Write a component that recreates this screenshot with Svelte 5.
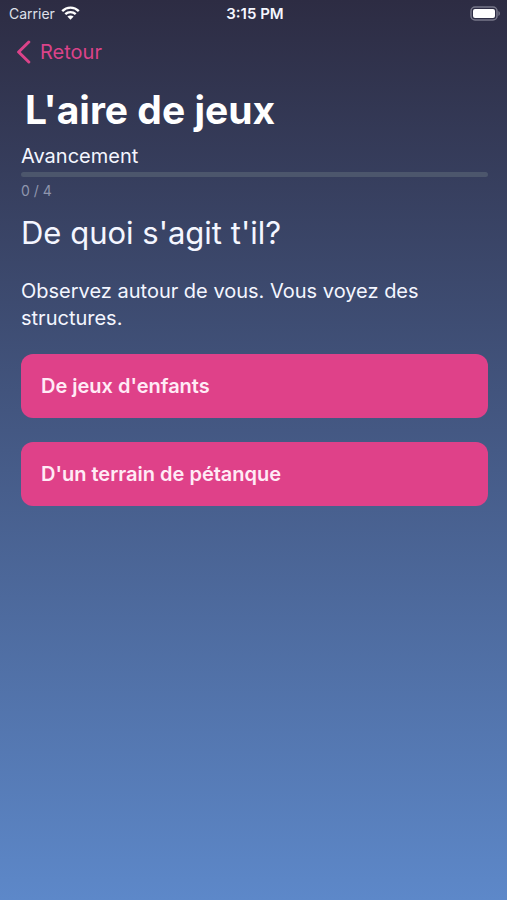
<script>
  const done = 0;
  const total = 4;
  const answers = ["De jeux d'enfants", "D'un terrain de pétanque"];
</script>

<div class="screen">
  <header class="status">
    <div class="carrier">
      <span>Carrier</span>
      <svg width="19" height="14" viewBox="0 0 19 14" aria-hidden="true">
        <g fill="none" stroke="#fff" stroke-width="2.4">
          <path d="M1.2 5.1C5.9.5 13.1.5 17.8 5.1" />
          <path d="M4.3 8.2c2.9-2.8 7.5-2.8 10.4 0" />
        </g>
        <path d="M9.5 13.8 6.4 10.6c1.8-1.6 4.4-1.6 6.2 0z" fill="#fff" />
      </svg>
    </div>
    <time>3:15 PM</time>
    <svg class="battery" width="31" height="15" viewBox="0 0 31 15" aria-hidden="true">
      <rect x="1" y="1" width="26" height="13" rx="4" fill="none" stroke="#777789" stroke-width="1.5" />
      <rect x="3" y="3" width="22" height="9" rx="2" fill="#fff" />
      <path d="M28.4 5v5c2-.8 2-4.2 0-5z" fill="#777789" />
    </svg>
  </header>

  <nav>
    <button class="back" type="button">
      <svg width="15" height="24" viewBox="0 0 15 24" aria-hidden="true">
        <path d="M12.8 2 2.6 12l10.2 10" fill="none" stroke="currentColor" stroke-width="3" stroke-linecap="round" stroke-linejoin="round" />
      </svg>
      <span>Retour</span>
    </button>
  </nav>

  <main>
    <h1>L'aire de jeux</h1>
    <label for="progress">Avancement</label>
    <progress id="progress" value={done} max={total}></progress>
    <div class="count">{done} / {total}</div>
    <h2>De quoi s'agit t'il?</h2>
    <p>Observez autour de vous. Vous voyez des structures.</p>
    <div class="answers">
      {#each answers as answer}
        <button class="answer" type="button">{answer}</button>
      {/each}
    </div>
  </main>
</div>

<style>
  .screen {
    box-sizing: border-box;
    min-height: 100vh;
    background: linear-gradient(#2d2c43, #5d88c9);
    color: #f4f6ff;
    font-family: Inter, "Liberation Sans", sans-serif;
  }
  .status {
    display: grid;
    grid-template-columns: 1fr auto 1fr;
    align-items: center;
    height: 26px;
    padding: 0 6px 0 9px;
    font-size: 14px;
  }
  .carrier {
    display: flex;
    align-items: center;
    gap: 6px;
    color: #dfe0ea;
  }
  time {
    font-size: 15px;
    font-weight: 600;
  }
  .battery {
    justify-self: end;
  }
  nav {
    display: flex;
    align-items: center;
    height: 52px;
    padding: 0 16px;
  }
  button {
    border: 0;
    font-family: inherit;
    cursor: pointer;
  }
  .back {
    display: flex;
    align-items: center;
    gap: 9px;
    padding: 0;
    background: none;
    color: #db4389;
    font-size: 20px;
    line-height: 28px;
  }
  main {
    display: flex;
    flex-direction: column;
    padding: 8px 19px 24px 21px;
  }
  h1 {
    margin: 0 4px;
    color: #fff;
    font-size: 39px;
    font-weight: 700;
    line-height: 48px;
  }
  label {
    margin-top: 8px;
    font-size: 20px;
    line-height: 28px;
  }
  progress {
    appearance: none;
    width: 100%;
    height: 5px;
    margin-top: 2px;
    border: 0;
    border-radius: 3px;
    background: #4c566c;
    overflow: hidden;
  }
  progress::-webkit-progress-bar {
    background: #4c566c;
  }
  progress::-webkit-progress-value {
    background: #df4189;
  }
  .count {
    margin-top: 4px;
    color: #8f96ae;
    font-size: 14px;
    line-height: 20px;
  }
  h2 {
    margin: 10px 0 0;
    font-size: 31px;
    font-weight: 400;
    line-height: 44px;
  }
  p {
    margin: 23px 0 0;
    font-size: 20px;
    line-height: 27px;
  }
  .answers {
    display: flex;
    flex-direction: column;
    gap: 24px;
    margin-top: 22px;
  }
  .answer {
    min-height: 64px;
    padding: 16px 20px;
    border-radius: 12px;
    background: #df4189;
    color: #ffebf6;
    font-size: 20px;
    font-weight: 600;
    line-height: 28px;
    text-align: left;
  }
</style>
